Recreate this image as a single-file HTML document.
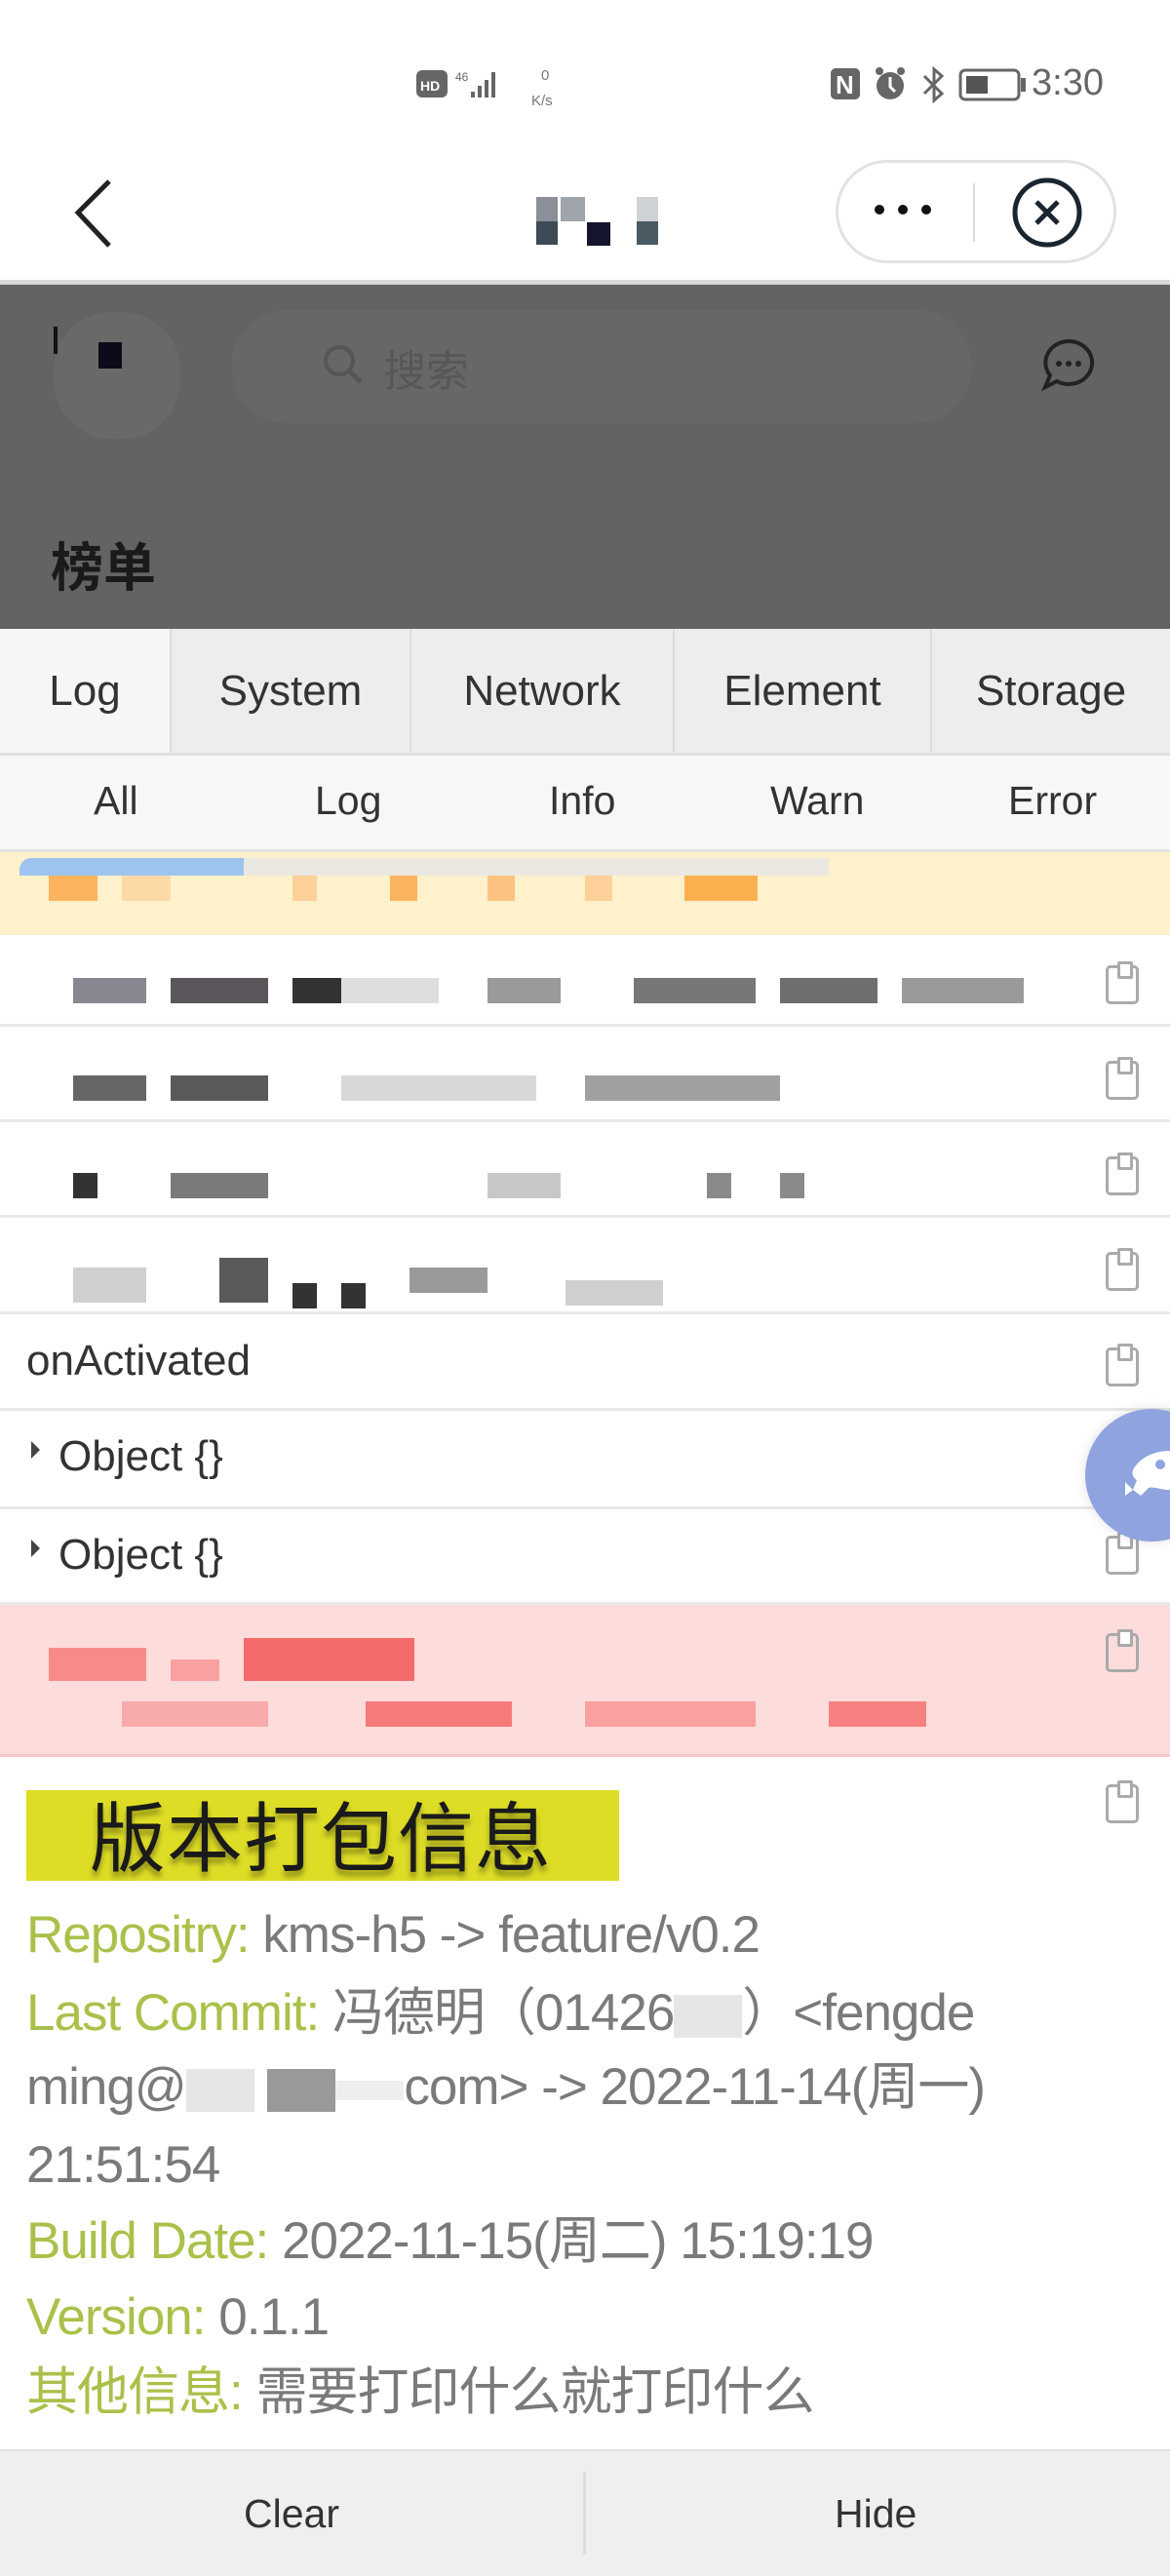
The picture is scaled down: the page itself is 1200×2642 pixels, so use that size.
<!DOCTYPE html>
<html><head><meta charset="utf-8">
<style>
*{margin:0;padding:0;box-sizing:border-box}
html,body{width:1200px;height:2642px;overflow:hidden;background:#fff;font-family:"Liberation Sans","Noto Sans CJK SC",sans-serif}
.a{position:absolute}
.tab{position:absolute;top:645px;height:127px;background:#ededed;border-right:2px solid #dcdcdc;font-size:44px;color:#333;display:flex;align-items:center;justify-content:center}
.flt{position:absolute;top:798px;font-size:41px;color:#333}
.row{position:absolute;left:0;width:1200px;border-bottom:3px solid #e8e8e8;background:#fff}
.cp{position:absolute;left:1134px;width:34px;height:40px;border:3px solid #aaa;border-radius:5px}
.cp:before{content:"";position:absolute;left:9px;top:-7px;width:10px;height:12px;border:3px solid #aaa;background:#fff;border-radius:2px}
.px{position:absolute;height:26px}
.ln{position:absolute;left:27px;font-size:53px;line-height:64px;height:64px;color:#7a7a7a;white-space:nowrap;letter-spacing:-1px}
.lb{color:#a9c14a}
</style></head><body>

<!-- status bar -->
<svg class="a" style="left:425px;top:68px" width="170" height="50">
<rect x="2" y="4" width="32" height="28" rx="6" fill="#666"/>
<text x="6" y="25" font-size="14" font-weight="bold" fill="#fff" font-family="Liberation Sans">HD</text>
<text x="42" y="15" font-size="12" fill="#666" font-family="Liberation Sans">46</text>
<rect x="58" y="26" width="4" height="6" fill="#666"/><rect x="65" y="20" width="4" height="12" fill="#666"/><rect x="72" y="14" width="4" height="18" fill="#666"/><rect x="79" y="6" width="4" height="26" fill="#666"/>
<text x="130" y="14" font-size="15" fill="#777" font-family="Liberation Sans">0</text>
<text x="120" y="40" font-size="15" fill="#777" font-family="Liberation Sans">K/s</text>
</svg>
<svg class="a" style="left:850px;top:66px" width="210" height="42">
<rect x="2" y="4" width="30" height="32" rx="5" fill="#666"/>
<text x="7" y="30" font-size="26" font-weight="bold" fill="#fff" font-family="Liberation Sans">N</text>
<circle cx="63" cy="22" r="14" fill="#666"/><circle cx="52" cy="7" r="4" fill="#666"/><circle cx="74" cy="7" r="4" fill="#666"/>
<path d="M63 13v10l5 5" stroke="#fff" stroke-width="3" fill="none"/>
<path d="M98 12l18 18-8 7V5l8 7-18 18" stroke="#666" stroke-width="3" fill="none"/>
<rect x="135" y="6" width="60" height="30" rx="5" stroke="#666" stroke-width="3" fill="none"/>
<rect x="141" y="12" width="22" height="18" fill="#555"/><rect x="197" y="14" width="5" height="14" fill="#666"/>
</svg>
<div class="a" style="left:1058px;top:64px;font-size:38px;color:#666">3:30</div>

<!-- nav bar -->
<svg class="a" style="left:70px;top:180px" width="50" height="75"><path d="M42 6L10 38l32 34" stroke="#222" stroke-width="5" fill="none"/></svg>
<div class="a" style="left:550px;top:202px;width:22px;height:25px;background:#8b8f99"></div>
<div class="a" style="left:575px;top:202px;width:25px;height:25px;background:#a0a4ab"></div>
<div class="a" style="left:550px;top:227px;width:22px;height:24px;background:#3e4a55"></div>
<div class="a" style="left:602px;top:228px;width:24px;height:24px;background:#151530"></div>
<div class="a" style="left:653px;top:202px;width:22px;height:25px;background:#cfd2d4"></div>
<div class="a" style="left:653px;top:227px;width:22px;height:24px;background:#4a5a62"></div>
<div class="a" style="left:857px;top:164px;width:288px;height:106px;border:3px solid #e2e2e2;border-radius:53px;background:#fff"></div>
<svg class="a" style="left:890px;top:200px" width="80" height="30"><circle cx="12" cy="15" r="5" fill="#111"/><circle cx="36" cy="15" r="5" fill="#111"/><circle cx="60" cy="15" r="5" fill="#111"/></svg>
<div class="a" style="left:998px;top:188px;width:2px;height:60px;background:#ddd"></div>
<svg class="a" style="left:1036px;top:180px" width="80" height="80"><circle cx="38" cy="38" r="33" stroke="#1a2530" stroke-width="5" fill="none"/><path d="M27 27l22 22M49 27L27 49" stroke="#1a2530" stroke-width="5"/></svg>
<div class="a" style="left:0;top:287px;width:1200px;height:5px;background:#d8d8d8"></div>

<!-- gray overlay -->
<div class="a" style="left:0;top:292px;width:1200px;height:353px;background:#636363"></div>
<div class="a" style="left:55px;top:320px;width:130px;height:130px;border-radius:60px;background:#686a68"></div>
<div class="a" style="left:55px;top:335px;width:4px;height:28px;background:#111"></div>
<div class="a" style="left:101px;top:351px;width:24px;height:27px;background:#0b0b1a"></div>
<div class="a" style="left:237px;top:318px;width:760px;height:116px;border-radius:58px;background:#676767"></div>
<svg class="a" style="left:328px;top:350px" width="50" height="50"><circle cx="20" cy="20" r="14" stroke="#555" stroke-width="4" fill="none"/><path d="M30 30l12 12" stroke="#555" stroke-width="5"/></svg>
<div class="a" style="left:393px;top:345px;font-size:44px;color:#575757">搜索</div>
<svg class="a" style="left:1066px;top:345px" width="60" height="60"><path d="M30 5a24 22 0 1 1-12 41L6 52l5-12A24 22 0 0 1 30 5z" stroke="#222" stroke-width="4" fill="none"/><circle cx="20" cy="28" r="3" fill="#222"/><circle cx="30" cy="28" r="3" fill="#222"/><circle cx="40" cy="28" r="3" fill="#222"/></svg>
<div class="a" style="left:52px;top:538px;font-size:54px;color:#1a1a1a;font-weight:bold">榜单</div>

<!-- tabs -->
<div class="tab" style="left:0;width:176px;background:#f6f6f6">Log</div>
<div class="tab" style="left:176px;width:246px">System</div>
<div class="tab" style="left:422px;width:270px">Network</div>
<div class="tab" style="left:692px;width:264px">Element</div>
<div class="tab" style="left:956px;width:244px;border-right:0">Storage</div>
<div class="a" style="left:0;top:772px;width:1200px;height:102px;background:#f7f7f7;border-top:3px solid #e0e0e0;border-bottom:3px solid #e3e3e3"></div>
<div class="flt" style="left:96px">All</div>
<div class="flt" style="left:323px">Log</div>
<div class="flt" style="left:563px">Info</div>
<div class="flt" style="left:790px">Warn</div>
<div class="flt" style="left:1034px">Error</div>

<!-- yellow warn row -->
<div class="a" style="left:0;top:874px;width:1200px;height:85px;background:#fff1cc"></div>
<div class="a" style="left:20px;top:880px;width:230px;height:18px;background:#9dc4ee;border-radius:12px 0 0 0"></div>
<div class="a" style="left:250px;top:880px;width:600px;height:18px;background:#ebe8e2"></div>
<div class="px" style="left:50px;top:898px;width:50px;background:#fbb35e"></div>
<div class="px" style="left:125px;top:898px;width:50px;background:#fdd9a8"></div>
<div class="px" style="left:300px;top:898px;width:25px;background:#fdd09a"></div>
<div class="px" style="left:400px;top:898px;width:28px;background:#fbb35e"></div>
<div class="px" style="left:500px;top:898px;width:28px;background:#fcc380"></div>
<div class="px" style="left:600px;top:898px;width:28px;background:#fdd09a"></div>
<div class="px" style="left:702px;top:898px;width:75px;background:#fbb050"></div>

<!-- log rows -->
<div class="row" style="top:959px;height:94px"></div>
<div class="cp" style="top:990px"></div>
<div class="px" style="left:75px;top:1003px;width:75px;background:#8a8690"></div>
<div class="px" style="left:175px;top:1003px;width:100px;background:#5a565c"></div>
<div class="px" style="left:300px;top:1003px;width:50px;background:#333"></div>
<div class="px" style="left:350px;top:1003px;width:100px;background:#dedede"></div>
<div class="px" style="left:500px;top:1003px;width:75px;background:#9a9a9a"></div>
<div class="px" style="left:650px;top:1003px;width:125px;background:#777"></div>
<div class="px" style="left:800px;top:1003px;width:100px;background:#6f6f6f"></div>
<div class="px" style="left:925px;top:1003px;width:125px;background:#9a9a9a"></div>

<div class="row" style="top:1053px;height:98px"></div>
<div class="cp" style="top:1088px"></div>
<div class="px" style="left:75px;top:1103px;width:75px;background:#666"></div>
<div class="px" style="left:175px;top:1103px;width:100px;background:#5a5a5a"></div>
<div class="px" style="left:350px;top:1103px;width:200px;background:#d8d8d8"></div>
<div class="px" style="left:600px;top:1103px;width:200px;background:#a0a0a0"></div>

<div class="row" style="top:1151px;height:98px"></div>
<div class="cp" style="top:1186px"></div>
<div class="px" style="left:75px;top:1203px;width:25px;background:#333"></div>
<div class="px" style="left:175px;top:1203px;width:100px;background:#7a7a7a"></div>
<div class="px" style="left:500px;top:1203px;width:75px;background:#c8c8c8"></div>
<div class="px" style="left:725px;top:1203px;width:25px;background:#8a8a8a"></div>
<div class="px" style="left:800px;top:1203px;width:25px;background:#8a8a8a"></div>

<div class="row" style="top:1249px;height:99px"></div>
<div class="cp" style="top:1284px"></div>
<div class="px" style="left:75px;top:1300px;width:75px;height:36px;background:#cfcfcf"></div>
<div class="px" style="left:225px;top:1290px;width:50px;height:46px;background:#5a5a5a"></div>
<div class="px" style="left:300px;top:1316px;width:25px;background:#333"></div>
<div class="px" style="left:350px;top:1316px;width:25px;background:#333"></div>
<div class="px" style="left:420px;top:1300px;width:80px;background:#9a9a9a"></div>
<div class="px" style="left:580px;top:1313px;width:100px;background:#d0d0d0"></div>

<div class="row" style="top:1348px;height:99px"></div>
<div class="a" style="left:27px;top:1371px;font-size:44px;color:#333">onActivated</div>
<div class="cp" style="top:1382px"></div>

<div class="row" style="top:1447px;height:101px"></div>
<div class="a" style="left:32px;top:1478px;width:0;height:0;border-left:9px solid #444;border-top:9px solid transparent;border-bottom:9px solid transparent"></div>
<div class="a" style="left:60px;top:1469px;font-size:44px;color:#333">Object {}</div>

<div class="row" style="top:1548px;height:98px"></div>
<div class="a" style="left:32px;top:1579px;width:0;height:0;border-left:9px solid #444;border-top:9px solid transparent;border-bottom:9px solid transparent"></div>
<div class="a" style="left:60px;top:1570px;font-size:44px;color:#333">Object {}</div>
<div class="cp" style="top:1575px"></div>

<!-- red row -->
<div class="a" style="left:0;top:1646px;width:1200px;height:156px;background:#fddcdc;border-bottom:3px solid #f9c6c6"></div>
<div class="cp" style="top:1675px"></div>
<div class="px" style="left:50px;top:1690px;width:100px;height:34px;background:#f98a8a"></div>
<div class="px" style="left:175px;top:1702px;width:50px;height:22px;background:#f9a0a0"></div>
<div class="px" style="left:250px;top:1680px;width:175px;height:44px;background:#f46a6a"></div>
<div class="px" style="left:125px;top:1745px;width:150px;background:#f9aaaa"></div>
<div class="px" style="left:375px;top:1745px;width:150px;background:#f77a7a"></div>
<div class="px" style="left:600px;top:1745px;width:175px;background:#f9a0a0"></div>
<div class="px" style="left:850px;top:1745px;width:100px;background:#f68080"></div>

<!-- version info -->
<div class="cp" style="top:1830px"></div>
<div class="a" style="left:27px;top:1836px;width:608px;height:93px;background:#dedd26"></div>
<div class="a" style="left:92px;top:1838px;font-size:78px;line-height:96px;color:#1a1a1a;text-shadow:0 6px 6px rgba(0,0,0,0.35);letter-spacing:1px">版本打包信息</div>
<div class="ln" style="top:1953px"><span class="lb">Repositry:</span> kms-h5 -&gt; feature/v0.2</div>
<div class="ln" style="top:2033px"><span class="lb">Last Commit:</span> 冯德明（01426<span style="display:inline-block;width:70px;height:44px;background:#e6e6e6;vertical-align:middle"></span>）&lt;fengde</div>
<div class="ln" style="top:2109px">ming@<span style="display:inline-block;width:70px;height:44px;background:#e6e6e6;vertical-align:middle"></span> <span style="display:inline-block;width:70px;height:44px;background:#999;vertical-align:middle"></span><span style="display:inline-block;width:70px;height:20px;background:#eee;vertical-align:middle"></span>com&gt; -&gt; 2022-11-14(周一)</div>
<div class="ln" style="top:2189px">21:51:54</div>
<div class="ln" style="top:2267px"><span class="lb">Build Date:</span> 2022-11-15(周二) 15:19:19</div>
<div class="ln" style="top:2345px"><span class="lb">Version:</span> 0.1.1</div>
<div class="ln" style="top:2422px"><span class="lb">其他信息:</span> 需要打印什么就打印什么</div>

<!-- bottom bar -->
<div class="a" style="left:0;top:2512px;width:1200px;height:130px;background:#efefef;border-top:2px solid #e2e2e2"></div>
<div class="a" style="left:598px;top:2535px;width:3px;height:85px;background:#dcdcdc"></div>
<div class="a" style="left:250px;top:2555px;font-size:41px;color:#333">Clear</div>
<div class="a" style="left:856px;top:2555px;font-size:41px;color:#333">Hide</div>

<!-- float button -->
<div class="a" style="left:1113px;top:1445px;width:136px;height:136px;border-radius:68px;background:#8fa4df;box-shadow:0 0 12px rgba(0,0,0,0.12)"></div>
<svg class="a" style="left:1148px;top:1480px" width="52" height="70"><path d="M18 22c8-10 22-14 34-14v40c-10 0-18-4-22-2l-8 8-8-6 4-10c-6-4-6-10 0-16z" fill="#fff"/><circle cx="42" cy="22" r="5" fill="#8fa4df"/><path d="M6 40l8 8-8 6z" fill="#fff"/></svg>

</body></html>
